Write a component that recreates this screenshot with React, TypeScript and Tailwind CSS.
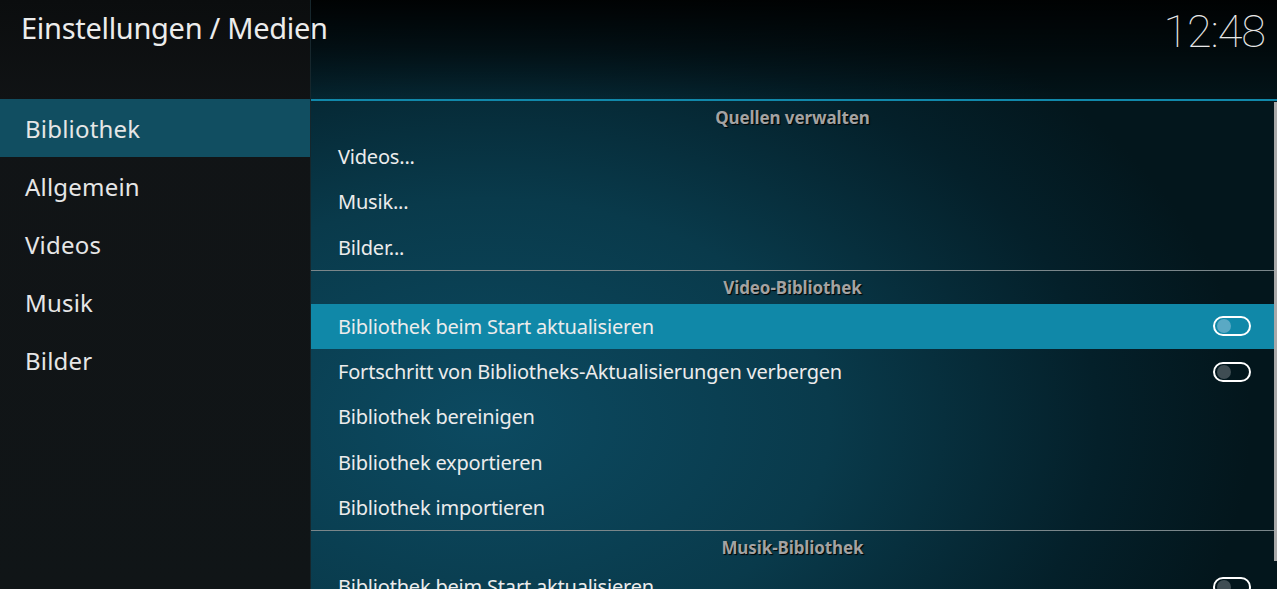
import React from "react";

const sans = { fontFamily: '"Noto Sans", "Open Sans", sans-serif' };

function Toggle({ active }: { active: boolean }) {
  return (
    <div className="w-[38px] h-[20px] rounded-full border-2 border-white flex items-center pl-[2px]">
      <div className={`w-[14px] h-[14px] rounded-full ${active ? "bg-[#5aa9c4]" : "bg-[#3f4d53]"}`} />
    </div>
  );
}

function Row({ label, toggle, active }: { label: string; toggle?: boolean; active?: boolean }) {
  return (
    <div className={`h-[45.25px] shrink-0 flex items-center justify-between pl-[27px] pr-[23px] ${active ? "bg-[#1088a8]" : ""}`}>
      <span className="text-[20px] text-[#ececec] tracking-[-0.2px] leading-[28px] pt-[1px]">{label}</span>
      {toggle ? <Toggle active={!!active} /> : null}
    </div>
  );
}

function Header({ title, first }: { title: string; first?: boolean }) {
  return (
    <div className={`${first ? "h-[33px]" : "h-[34px] border-t border-[#7a868a]"} shrink-0 flex items-center justify-center`}>
      <span className="text-[17px] font-bold text-[#a3a3a3] tracking-[-0.1px] pt-[1px] [text-shadow:1px_1px_1px_#000]">
        {title}
      </span>
    </div>
  );
}

export default function App() {
  const nav = ["Bibliothek", "Allgemein", "Videos", "Musik", "Bilder"];
  return (
    <div
      className="relative w-[1277px] h-[589px] overflow-hidden flex bg-[radial-gradient(ellipse_60%_85%_at_38%_72%,#0c4a61_0%,#093a4b_45%,#04202a_80%,#03161c_100%)]"
      style={sans}
    >
      {/* Sidebar */}
      <div className="w-[311px] h-full flex flex-col bg-[linear-gradient(to_bottom,#0b0d0e_0%,#111416_20%,#101517_100%)] border-r border-[#16262c]">
        <div className="h-[99px] shrink-0" />
        {nav.map((n, i) => (
          <div
            key={n}
            className={`h-[58px] flex items-center pl-[25px] pt-[2px] ${i === 0 ? "bg-[#114e61]" : ""}`}
          >
            <span className="text-[24px] text-[#e6e6e6] tracking-[0.2px]">{n}</span>
          </div>
        ))}
      </div>

      {/* Main */}
      <div className="flex-1 h-full flex flex-col">
        <div className="h-[99px] shrink-0 bg-[linear-gradient(to_bottom,rgba(0,0,0,0.92)_0%,rgba(0,0,0,0.55)_50%,rgba(0,0,0,0.1)_100%)]" />
        <div className="h-[2px] bg-[#1188aa] shrink-0" />
        <div className="flex-1 flex min-h-0">
          <div className="flex-1 flex flex-col">
            <Header title="Quellen verwalten" first />
            <Row label="Videos..." />
            <Row label="Musik..." />
            <Row label="Bilder..." />
            <Header title="Video-Bibliothek" />
            <Row label="Bibliothek beim Start aktualisieren" toggle active />
            <Row label="Fortschritt von Bibliotheks-Aktualisierungen verbergen" toggle />
            <Row label="Bibliothek bereinigen" />
            <Row label="Bibliothek exportieren" />
            <Row label="Bibliothek importieren" />
            <Header title="Musik-Bibliothek" />
            <Row label="Bibliothek beim Start aktualisieren" toggle />
          </div>
          <div className="w-[3px] flex flex-col pt-[1px]">
            <div className="h-[459px] bg-[#a9a9a9]" />
          </div>
        </div>
      </div>

      {/* Title bar overlay */}
      <div className="absolute inset-x-0 top-0 h-[99px] flex items-start justify-between pl-[21px] pr-[12px]">
        <span className="mt-[6px] text-[29px] text-[#ececec] tracking-[-0.3px]">Einstellungen / Medien</span>
        <span
          className="mt-[-2px] text-[45px] font-thin text-[#e8e8e8] tracking-[-1px]"
          style={{ fontFamily: 'Roboto, "Noto Sans", sans-serif' }}
        >
          12:48
        </span>
      </div>
    </div>
  );
}
